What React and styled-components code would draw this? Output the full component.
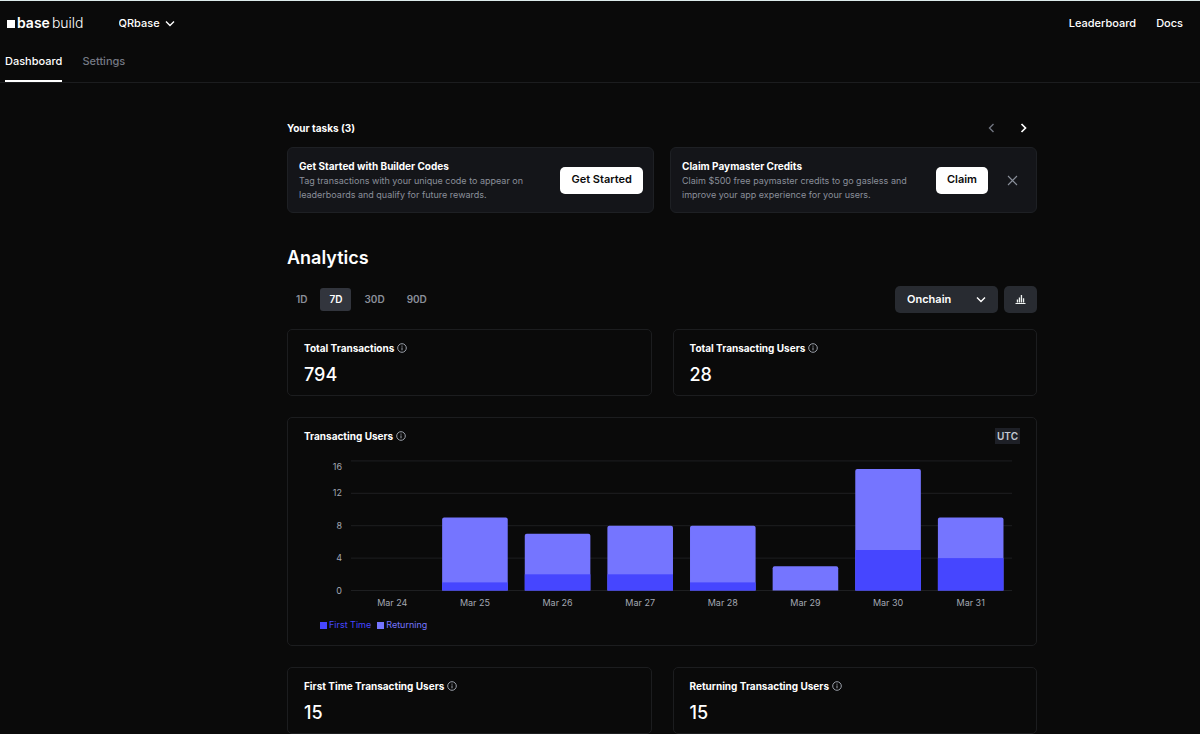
import React, { useState } from "react";
import styled, { createGlobalStyle } from "styled-components";

const GlobalStyle = createGlobalStyle`
  * {
    box-sizing: border-box;
  }
  body {
    margin: 0;
    background: #0a0a0a;
    color: #ffffff;
    font-family: Inter, "Liberation Sans", sans-serif;
    font-size: 11px;
    line-height: 16px;
    border-top: 1px solid #dcebeb;
    overflow: hidden;
  }
  button, select {
    font-family: inherit;
    font-size: 11px;
    line-height: 16px;
    border: 0;
    padding: 0;
    margin: 0;
    background: none;
    color: inherit;
    cursor: pointer;
  }
  h1, h2, h3, p {
    margin: 0;
  }
`;

const TopBar = styled.header`
  display: flex;
  align-items: center;
  height: 44px;
  padding: 0 17px 0 7px;
`;

const Logo = styled.a`
  display: flex;
  align-items: center;
  gap: 2px;
  margin-right: 35px;
  color: #ffffff;
  font-size: 14px;
  font-weight: 600;
  text-decoration: none;
`;

const LogoSquare = styled.span`
  width: 8px;
  height: 8px;
  margin-top: 2px;
  background: #ffffff;
`;

const LogoLight = styled.span`
  font-weight: 300;
`;

const SelectWrap = styled.div`
  display: grid;
  align-items: center;
  background: ${props => (props.$filled ? "#282b31" : "transparent")};
  border-radius: 5px;

  select, svg {
    grid-area: 1 / 1;
  }

  svg {
    justify-self: end;
    margin-right: ${props => (props.$filled ? "12px" : "0")};
    pointer-events: none;
  }
`;

const Select = styled.select`
  appearance: none;
  height: 27px;
  font-weight: ${props => (props.$filled ? 600 : 500)};
  padding: ${props => (props.$filled ? "0 46px 2px 12px" : "0 14px 0 0")};
  border-radius: 5px;

  option {
    background: #141519;
  }
`;

const TopLinks = styled.nav`
  display: flex;
  gap: 20px;
  margin-left: auto;

  a {
    color: #ffffff;
    font-weight: 500;
    text-decoration: none;
  }
`;

const Tabs = styled.nav`
  display: flex;
  gap: 20px;
  height: 38px;
  padding: 0 5px;
  border-bottom: 1px solid #1c1d1f;
`;

const Tab = styled.a`
  padding-top: 8px;
  font-weight: 500;
  text-decoration: none;
  color: ${props => (props.$active ? "#ffffff" : "#757984")};
  border-bottom: 2px solid ${props => (props.$active ? "#ffffff" : "transparent")};
`;

const Main = styled.main`
  padding: 33px 0 0 124px;
`;

const Content = styled.div`
  max-width: 750px;
  margin: 0 auto;
`;

const Row = styled.div`
  display: flex;
  align-items: center;
  justify-content: space-between;
`;

const TasksTitle = styled.h2`
  font-size: 10px;
  font-weight: 700;
  line-height: 24px;
`;

const Pager = styled.div`
  display: flex;
  gap: 8px;
  padding-right: 2px;
`;

const PagerButton = styled.button`
  display: flex;
  align-items: center;
  justify-content: center;
  width: 24px;
  height: 24px;
  color: ${props => (props.disabled ? "#717580" : "#ffffff")};
`;

const TaskList = styled.div`
  display: grid;
  grid-template-columns: 1fr 1fr;
  gap: 16px;
  margin-top: 7px;
`;

const TaskCard = styled.article`
  display: flex;
  align-items: center;
  gap: 11px;
  height: 66px;
  padding: 0 10px 0 11px;
  background: #141519;
  border: 1px solid #1e2024;
  border-radius: 6px;
`;

const TaskText = styled.div`
  flex: 1;
  min-width: 0;
`;

const TaskTitle = styled.h3`
  font-size: 10px;
  font-weight: 700;
  line-height: 16px;
`;

const TaskInfo = styled.p`
  max-width: 240px;
  color: #8a8f9a;
  font-size: 9px;
  line-height: 14px;
`;

const WhiteButton = styled.button`
  height: 27px;
  padding: 0 11px 2px;
  background: #ffffff;
  color: #0a0a0a;
  font-weight: 600;
  border-radius: 5px;
`;

const CloseButton = styled.button`
  display: flex;
  align-items: center;
  justify-content: center;
  width: 27px;
  height: 27px;
  color: #8a8f9a;
`;

const PageTitle = styled.h1`
  margin-top: 33px;
  font-size: 18px;
  font-weight: 600;
  line-height: 24px;
`;

const Toolbar = styled(Row)`
  margin: 16px 0;
`;

const Ranges = styled.div`
  display: flex;
  gap: 4px;
`;

const RangeButton = styled.button`
  height: 23px;
  padding: 0 9px 2px;
  font-size: 10px;
  font-weight: 600;
  border-radius: 3px;
  color: ${props => (props.$active ? "#ffffff" : "#8a8f9a")};
  background: ${props => (props.$active ? "#32353d" : "transparent")};
`;

const Filters = styled.div`
  display: flex;
  gap: 6px;
`;

const IconButton = styled.button`
  display: flex;
  align-items: center;
  justify-content: center;
  width: 33px;
  height: 27px;
  background: #282b31;
  border-radius: 5px;
`;

const StatGrid = styled.div`
  display: grid;
  grid-template-columns: 1fr 1fr;
  gap: 21px;
`;

const Card = styled.section`
  padding: 10px 16px 8px;
  border: 1px solid #1c1d1f;
  border-radius: 5px;
`;

const CardTitle = styled.h3`
  display: flex;
  align-items: center;
  gap: 3px;
  font-size: 10px;
  font-weight: 700;
  line-height: 16px;

  svg {
    color: #9a9fa9;
  }
`;

const StatValue = styled.p`
  margin-top: 7px;
  font-size: 18px;
  font-weight: 500;
  line-height: 24px;
`;

const ChartCard = styled(Card)`
  margin: 21px 0;
`;

const Badge = styled.span`
  padding: 0 2px;
  background: #1e2027;
  color: #c5c9d2;
  font-size: 10px;
  font-weight: 600;
`;

const ChartSvg = styled.svg`
  display: block;
  width: 100%;
  margin-top: 10px;
  font-size: 9px;
  fill: #a3a8b3;
`;

const Legend = styled.div`
  display: flex;
  gap: 6px;
  padding: 0 0 4px 16px;
  margin-top: 5px;
`;

const LegendItem = styled.span`
  display: flex;
  align-items: center;
  gap: 2px;
  color: ${props => props.$color};
  font-size: 9px;

  &::before {
    content: "";
    width: 7px;
    height: 7px;
    background: ${props => props.$color};
  }
`;

const FIRST = "#4646ff";
const RETURNING = "#7575ff";

const days = [
  { day: "Mar 24", first: 0, returning: 0 },
  { day: "Mar 25", first: 1, returning: 8 },
  { day: "Mar 26", first: 2, returning: 5 },
  { day: "Mar 27", first: 2, returning: 6 },
  { day: "Mar 28", first: 1, returning: 7 },
  { day: "Mar 29", first: 0, returning: 3 },
  { day: "Mar 30", first: 5, returning: 10 },
  { day: "Mar 31", first: 4, returning: 5 }
];

const Chevron = ({ points, width, height, stroke = 1.4 }) => (
  <svg width={width} height={height} viewBox={`0 0 ${width} ${height}`} fill="none" stroke="currentColor" strokeWidth={stroke}>
    <polyline points={points} />
  </svg>
);

const InfoIcon = () => (
  <svg width="10" height="10" viewBox="0 0 10 10" fill="none" stroke="currentColor">
    <circle cx="5" cy="5" r="4.3" />
    <path d="M5 4.4V7.3M5 2.6v1.1" />
  </svg>
);

const BarsIcon = () => (
  <svg width="11" height="11" viewBox="0 0 11 11" fill="#f0f4f2">
    <path d="M0.5 9h10v1H0.5zM1.8 5.4h1.3v3.2H1.8zM3.8 3.4h1.3v5.2H3.8zM5.8 1h1.3v7.6H5.8zM7.9 4.2h1.3v4.4H7.9z" />
  </svg>
);

const Stat = ({ title, value }) => (
  <Card>
    <CardTitle>
      {title} <InfoIcon />
    </CardTitle>
    <StatValue>{value}</StatValue>
  </Card>
);

const Chart = () => {
  const left = 47;
  const right = 708;
  const base = 136.5;
  const unit = 8.1;
  const step = (right - left) / days.length;
  const barWidth = 65.6;

  return (
    <ChartSvg viewBox="0 0 716 158" role="img" aria-label="Transacting users per day">
      {[0, 4, 8, 12, 16].map(tick => {
        const y = base - tick * unit;
        return (
          <g key={tick}>
            <line x1={left} x2={right} y1={y} y2={y} stroke="#1e1f21" />
            <text x="38" y={tick === 16 ? y + 9 : y + 3} textAnchor="end">{tick}</text>
          </g>
        );
      })}
      {days.map((d, i) => {
        const x = left + step * i + (step - barWidth) / 2;
        const total = (d.first + d.returning) * unit;
        const top = base - total;
        return (
          <g key={d.day}>
            {total > 0 && (
              <path
                fill={RETURNING}
                d={`M${x} ${base}V${top + 2}q0-2 2-2h${barWidth - 4}q2 0 2 2V${base}z`}
              />
            )}
            <rect x={x} y={base - d.first * unit} width={barWidth} height={d.first * unit} fill={FIRST} />
            <text x={x + barWidth / 2} y="152" textAnchor="middle">{d.day}</text>
          </g>
        );
      })}
    </ChartSvg>
  );
};

const App = () => {
  const [range, setRange] = useState("7D");

  return (
    <>
      <GlobalStyle />
      <TopBar>
        <Logo href="#home">
          <LogoSquare />
          <span>base</span>
          <LogoLight>build</LogoLight>
        </Logo>
        <SelectWrap>
          <Select aria-label="App">
            <option>QRbase</option>
          </Select>
          <Chevron points="1,1.5 5,5.5 9,1.5" width={10} height={7} />
        </SelectWrap>
        <TopLinks>
          <a href="#leaderboard">Leaderboard</a>
          <a href="#docs">Docs</a>
        </TopLinks>
      </TopBar>
      <Tabs>
        <Tab href="#dashboard" $active>Dashboard</Tab>
        <Tab href="#settings">Settings</Tab>
      </Tabs>
      <Main>
        <Content>
          <Row>
            <TasksTitle>Your tasks (3)</TasksTitle>
            <Pager>
              <PagerButton disabled aria-label="Previous">
                <Chevron points="5.5,1 1.5,5 5.5,9" width={7} height={10} />
              </PagerButton>
              <PagerButton aria-label="Next">
                <Chevron points="1.5,1 5.5,5 1.5,9" width={7} height={10} stroke={1.7} />
              </PagerButton>
            </Pager>
          </Row>
          <TaskList>
            <TaskCard>
              <TaskText>
                <TaskTitle>Get Started with Builder Codes</TaskTitle>
                <TaskInfo>
                  Tag transactions with your unique code to appear on leaderboards and qualify for future rewards.
                </TaskInfo>
              </TaskText>
              <WhiteButton>Get Started</WhiteButton>
            </TaskCard>
            <TaskCard>
              <TaskText>
                <TaskTitle>Claim Paymaster Credits</TaskTitle>
                <TaskInfo>
                  Claim $500 free paymaster credits to go gasless and improve your app experience for your users.
                </TaskInfo>
              </TaskText>
              <WhiteButton>Claim</WhiteButton>
              <CloseButton aria-label="Dismiss">
                <svg width="11" height="11" viewBox="0 0 11 11" stroke="currentColor" strokeWidth="1.1">
                  <path d="M1 1l9 9M10 1l-9 9" />
                </svg>
              </CloseButton>
            </TaskCard>
          </TaskList>

          <PageTitle>Analytics</PageTitle>
          <Toolbar>
            <Ranges>
              {["1D", "7D", "30D", "90D"].map(r => (
                <RangeButton key={r} $active={r === range} aria-pressed={r === range} onClick={() => setRange(r)}>
                  {r}
                </RangeButton>
              ))}
            </Ranges>
            <Filters>
              <SelectWrap $filled>
                <Select $filled aria-label="Data source">
                  <option>Onchain</option>
                </Select>
                <Chevron points="1,1.5 5,5.5 9,1.5" width={10} height={7} />
              </SelectWrap>
              <IconButton aria-label="Chart view">
                <BarsIcon />
              </IconButton>
            </Filters>
          </Toolbar>

          <StatGrid>
            <Stat title="Total Transactions" value="794" />
            <Stat title="Total Transacting Users" value="28" />
          </StatGrid>
          <ChartCard>
            <Row>
              <CardTitle>
                Transacting Users <InfoIcon />
              </CardTitle>
              <Badge>UTC</Badge>
            </Row>
            <Chart />
            <Legend>
              <LegendItem $color={FIRST}>First Time</LegendItem>
              <LegendItem $color={RETURNING}>Returning</LegendItem>
            </Legend>
          </ChartCard>
          <StatGrid>
            <Stat title="First Time Transacting Users" value="15" />
            <Stat title="Returning Transacting Users" value="15" />
          </StatGrid>
        </Content>
      </Main>
    </>
  );
};

export default App;
